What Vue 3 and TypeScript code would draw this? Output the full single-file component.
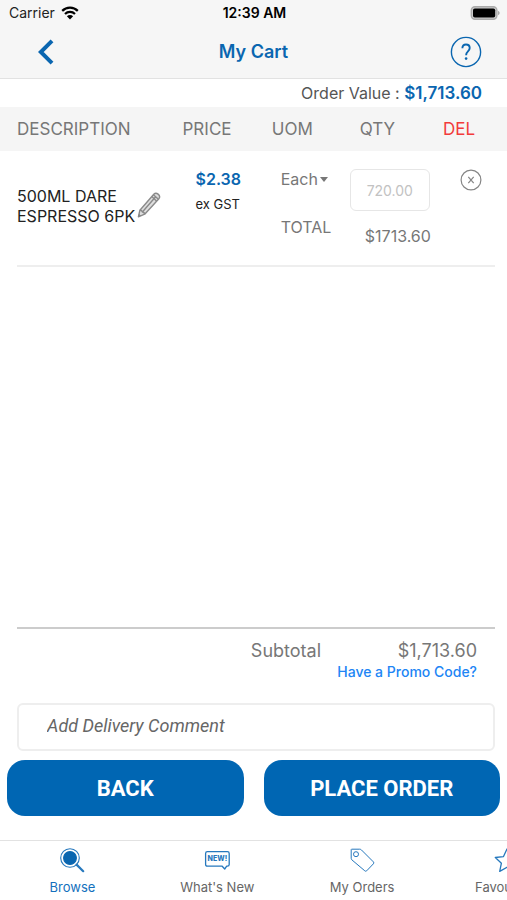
<script setup lang="ts">
import { ref } from 'vue'

interface CartLine {
  id: number
  name: string
  price: string
  quantity: string
  total: string
}

const lines: CartLine[] = [
  { id: 1, name: '500ML DARE ESPRESSO 6PK', price: '$2.38', quantity: '720.00', total: '$1713.60' },
]

const comment = ref('')
const tabs = ['Browse', "What's New", 'My Orders', 'Favourites']
const active = ref('Browse')
</script>

<template>
  <div class="page">
    <header class="top">
      <div class="status">
        <div class="carrier">
          <span>Carrier</span>
          <svg class="wifi" viewBox="0 0 18 14" aria-hidden="true">
            <path d="M1.2 4.9a11 11 0 0 1 15.6 0M4 8a7.1 7.1 0 0 1 10 0" fill="none" stroke="#000" stroke-width="2.2" />
            <path d="M9 13.6 5.9 10.3a4.4 4.4 0 0 1 6.2 0z" fill="#000" />
          </svg>
        </div>
        <span class="time">12:39 AM</span>
        <svg class="battery" viewBox="0 0 30 14" aria-hidden="true">
          <rect x="1.3" y=".8" width="25.6" height="12.4" rx="3.6" fill="#ccc" stroke="#aaa" stroke-width="1.4" />
          <rect x="3" y="2.5" width="22.2" height="9" rx="1.8" fill="#000" />
          <path d="M28 4.8v4.4q1.7-.7 1.7-2.2T28 4.8z" fill="#aaa" />
        </svg>
      </div>
      <div class="titlebar">
        <button class="icon-button" type="button" aria-label="Go back">
          <svg class="chevron" viewBox="0 0 16 26" aria-hidden="true">
            <path d="M14 1.8 2.8 13 14 24.2" fill="none" stroke="#0a66b0" stroke-width="4" />
          </svg>
        </button>
        <h1>My Cart</h1>
        <button class="icon-button help" type="button" aria-label="Help">
          <svg class="help-icon" viewBox="0 0 32 32" aria-hidden="true">
            <circle cx="16" cy="16" r="14.6" fill="none" stroke="#0a66b0" stroke-width="1.4" />
            <path d="M12.4 12.3C12.4 9.8 13.8 8.5 16 8.5s3.7 1.4 3.7 3.5c0 3.4-3.6 3.5-3.6 7.2" fill="none" stroke="#0a66b0" stroke-width="1.9" />
            <circle cx="16.1" cy="22.6" r="1.3" fill="#0a66b0" />
          </svg>
        </button>
      </div>
    </header>

    <main class="content">
      <p class="order-value">Order Value : <strong>$1,713.60</strong></p>

      <table class="cart">
        <colgroup>
          <col class="col-description" />
          <col class="col-price" />
          <col class="col-uom" />
          <col class="col-qty" />
          <col class="col-delete" />
        </colgroup>
        <thead>
          <tr>
            <th class="description" scope="col">DESCRIPTION</th>
            <th scope="col">PRICE</th>
            <th scope="col">UOM</th>
            <th class="qty-head" scope="col">QTY</th>
            <th class="del-head" scope="col">DEL</th>
          </tr>
        </thead>
        <tbody>
          <tr v-for="line in lines" :key="line.id">
            <td class="description">
              <div class="product">
                <span class="name">{{ line.name }}</span>
                <button class="icon-button" type="button" aria-label="Edit item">
                  <svg class="pencil" viewBox="0 0 24 26" aria-hidden="true">
                    <g fill="none" stroke="#8a8a8a" stroke-width="1.4" stroke-linejoin="round">
                      <path d="M1.4 24.8 2.9 18.2 16.8 2.2q2-2 4.3-.1 2.6 2.2.8 4.6L7.7 22.2z" fill="#dedede" />
                      <path d="M5.4 20 18.2 5.2M2.9 18.2q1.8-.2 2.5 1.8 1.9 0 2.3 2.2M14.8 4.5l4.9 4.7M16.4 2.7l5 4.6" />
                    </g>
                    <path d="m1.2 24.8.7-3 2.2 1.9z" fill="#858585" />
                  </svg>
                </button>
              </div>
            </td>
            <td class="price">
              <strong>{{ line.price }}</strong>
              <span>ex GST</span>
            </td>
            <td class="uom">
              <div class="unit">
                <select aria-label="Unit of measure">
                  <option>Each</option>
                </select>
                <svg class="caret" viewBox="0 0 8 5" aria-hidden="true"><path d="M0 0h8L4 5z" fill="#777" /></svg>
              </div>
              <span class="total-label">TOTAL</span>
            </td>
            <td class="qty">
              <input type="text" inputmode="decimal" aria-label="Quantity" :placeholder="line.quantity" />
              <span class="total">{{ line.total }}</span>
            </td>
            <td class="delete">
              <button class="icon-button" type="button" aria-label="Delete item">
                <svg class="remove" viewBox="0 0 22 22" aria-hidden="true">
                  <circle cx="11" cy="11" r="9.9" fill="none" stroke="#858585" stroke-width="1.2" />
                  <path d="m8.3 7.8 5.4 6.4m0-6.4-5.4 6.4" fill="none" stroke="#858585" stroke-width="1.2" />
                </svg>
              </button>
            </td>
          </tr>
        </tbody>
      </table>
      <hr class="divider" />
    </main>

    <section class="summary">
      <div class="subtotal">
        <span>Subtotal</span>
        <span class="amount">$1,713.60</span>
      </div>
      <a class="promo" href="#promo">Have a Promo Code?</a>
      <input v-model="comment" class="comment" type="text" aria-label="Delivery comment" placeholder="Add Delivery Comment" />
    </section>

    <div class="actions">
      <button type="button">BACK</button>
      <button type="button">PLACE ORDER</button>
    </div>

    <nav class="tabs">
      <a v-for="tab in tabs" :key="tab" href="#" :class="{ active: tab === active }" @click.prevent="active = tab">
        <svg viewBox="0 0 26 26" aria-hidden="true" fill="none" stroke="#2678bd" stroke-width="1.1" stroke-linejoin="round">
          <template v-if="tab === 'Browse'">
            <circle cx="11" cy="11" r="9.3" />
            <circle cx="11" cy="11" r="6.4" fill="#0a66b0" stroke="#0a66b0" />
            <path d="m17.6 17.6 6.6 6.6" stroke-width="2.2" stroke-linecap="round" />
          </template>
          <template v-else-if="tab === 'What\'s New'">
            <path d="M3.4 4.6h20q1.8 0 1.8 1.8v11q0 1.8-1.8 1.8h-.7l-2 2.8-2.5-2.8H3.4q-1.8 0-1.8-1.8v-11q0-1.8 1.8-1.8z" stroke-width="1.3" />
            <text x="13.4" y="14.4" text-anchor="middle">NEW!</text>
          </template>
          <path v-else-if="tab === 'My Orders'" d="M2.5 2.2h8.2q1 0 1.7.7l12 12q.9 1 0 1.9l-6.7 7q-1 .9-1.9 0L2.9 12.9q-.7-.7-.7-1.6V2.5zM9.5 7.2a2.5 2.5 0 1 1-5 0 2.5 2.5 0 1 1 5 0z" stroke-width="1" />
          <path v-else d="m13 2 3.5 7.6 8.2.9-6.1 5.7 1.7 8.2-7.3-4.2-7.3 4.2 1.7-8.2-6.1-5.7 8.2-.9z" stroke-width="1.3" />
        </svg>
        <span>{{ tab }}</span>
      </a>
    </nav>
  </div>
</template>

<style>
body {
  background: #fff;
}
</style>

<style scoped>
.page {
  display: flex;
  flex-direction: column;
  min-height: 100vh;
  overflow: hidden;
  font-family: Inter, "Liberation Sans", sans-serif;
  font-size: 16px;
  line-height: 20px;
  color: #777;
}

.page * {
  box-sizing: border-box;
}

button,
input,
select {
  margin: 0;
  padding: 0;
  border: 0;
  background: none;
  color: inherit;
  font: inherit;
}

svg {
  display: block;
}

.icon-button {
  display: block;
  cursor: pointer;
}

.top {
  background: #f6f6f6;
  border-bottom: 1px solid #e2e2e2;
}

.status,
.titlebar {
  display: grid;
  grid-template-columns: 1fr auto 1fr;
  align-items: center;
}

.status {
  height: 26px;
  padding: 0 7px 0 9px;
  font-size: 14px;
  color: #222;
}

.carrier {
  display: flex;
  align-items: center;
  gap: 6px;
}

.wifi {
  width: 18px;
  height: 14px;
}

.time {
  font-weight: 600;
  color: #000;
}

.battery {
  width: 30px;
  height: 14px;
  justify-self: end;
}

.titlebar {
  height: 52px;
  padding: 0 25px 0 38px;
}

.chevron {
  width: 16px;
  height: 26px;
}

h1 {
  margin: 0 0 0 -13px;
  font-size: 18px;
  font-weight: 600;
  color: #0a66b0;
}

.help {
  justify-self: end;
}

.help-icon {
  width: 32px;
  height: 32px;
}

.content {
  flex: 1;
}

.order-value {
  margin: 0;
  padding: 4px 25px 4px 0;
  text-align: right;
  font-size: 16px;
  color: #555;
}

.order-value strong {
  font-size: 17px;
  font-weight: 600;
  color: #0a66b0;
}

.cart {
  width: 100%;
  table-layout: fixed;
  border-collapse: collapse;
}

.col-description {
  width: 36%;
}

.col-price {
  width: 17.6%;
}

.col-uom {
  width: 15.4%;
}

.col-qty {
  width: 18.4%;
}

thead {
  background: #f5f5f5;
}

th {
  height: 44px;
  padding: 0;
  font-size: 17px;
  font-weight: 400;
  text-align: left;
}

td {
  height: 114px;
  padding: 18px 0 0;
  vertical-align: top;
}

.description {
  padding-left: 17px;
}

th.qty-head {
  padding-left: 10px;
}

th.del-head {
  color: #f23b3b;
}

.product {
  display: flex;
  align-items: center;
  padding-top: 17px;
  color: #222;
}

.name {
  width: 120px;
}

.pencil {
  width: 24px;
  height: 26px;
  margin-bottom: 2px;
}

.price {
  padding-left: 13px;
}

.price strong,
.price span {
  display: block;
}

.price strong {
  font-weight: 600;
  color: #0a66b0;
}

.price span {
  padding-top: 5px;
  font-size: 13px;
  color: #222;
}

.uom {
  padding-left: 9px;
}

.unit {
  display: flex;
  align-items: center;
}

.unit select {
  appearance: none;
  width: 39px;
}

.caret {
  width: 8px;
  height: 5px;
}

.total-label {
  display: block;
  padding-top: 28px;
}

.qty input {
  display: block;
  width: 80px;
  height: 42px;
  border: 1px solid #e6e6e6;
  border-radius: 6px;
  text-align: center;
  font-size: 14px;
}

.qty input::placeholder {
  color: #c2c2c2;
}

.total {
  display: block;
  padding: 15px 0 0 15px;
}

.delete {
  padding-left: 17px;
}

.remove {
  width: 22px;
  height: 22px;
}

.divider {
  height: 2px;
  margin: 0 12px 0 17px;
  border: 0;
  background: #eee;
}

.summary {
  display: flex;
  flex-direction: column;
  margin: 0 12px 0 17px;
  border-top: 2px solid #ccc;
}

.subtotal {
  display: flex;
  justify-content: flex-end;
  padding: 12px 18px 0 0;
  font-size: 18px;
}

.amount {
  width: 156px;
  text-align: right;
}

.promo {
  align-self: flex-end;
  margin-right: 18px;
  padding-top: 1px;
  font-size: 14px;
  font-weight: 500;
  color: #2185f5;
  text-decoration: none;
}

.comment {
  width: 100%;
  height: 48px;
  margin-top: 21px;
  padding: 0 29px 4px 28px;
  border: 2px solid #eee;
  border-radius: 6px;
  font-family: Roboto, sans-serif;
  font-size: 18px;
  font-style: italic;
}

.comment::placeholder {
  color: #666;
}

.actions {
  display: grid;
  grid-template-columns: 1fr 1fr;
  gap: 20px;
  padding: 9px 7px 24px;
}

.actions button {
  height: 56px;
  padding-top: 2px;
  border-radius: 18px;
  background: #0066b3;
  color: #fff;
  font-family: Roboto, sans-serif;
  font-size: 22px;
  font-weight: 700;
}

.tabs {
  display: grid;
  grid-auto-flow: column;
  grid-auto-columns: calc(100% / 3.5);
  height: 60px;
  border-top: 1px solid #e2e2e2;
  overflow: hidden;
}

.tabs a {
  display: flex;
  flex-direction: column;
  align-items: center;
  gap: 4px;
  padding-top: 6px;
  font-size: 13px;
  color: #666;
  text-decoration: none;
}

.tabs a.active {
  color: #1470bd;
}

.tabs svg {
  width: 26px;
  height: 26px;
}

.tabs text {
  fill: #2678bd;
  stroke: none;
  font-size: 7px;
  font-weight: 800;
}
</style>
